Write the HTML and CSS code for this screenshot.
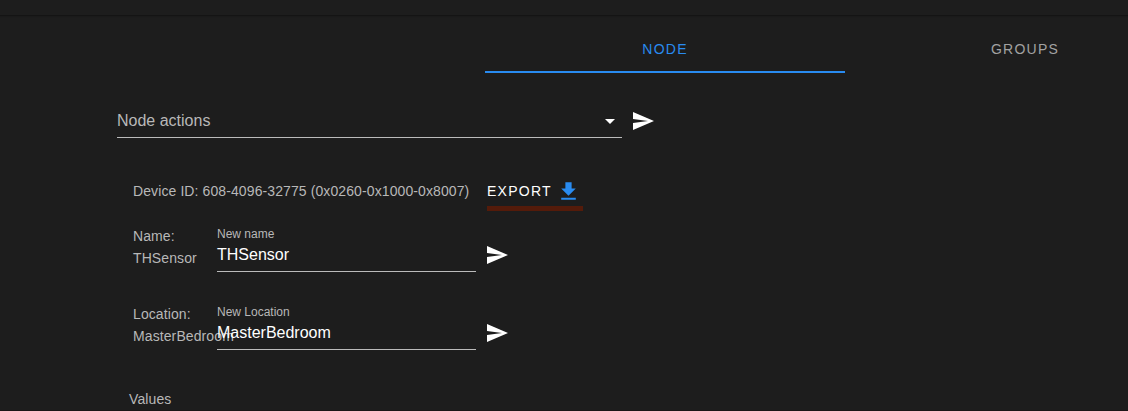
FILE: index.html
```html
<!DOCTYPE html>
<html lang="en">
<head>
<meta charset="utf-8">
<title>Node</title>
<link rel="stylesheet" href="styles.css">
</head>
<body>
<svg class="defs" width="0" height="0"><symbol id="send" viewBox="0 0 24 24"><path d="M2,21L23,12L2,3V10L17,12L2,14V21Z"/></symbol></svg>
<header class="topbar"></header>
<nav class="tabs">
  <div class="tab active"><span>NODE</span></div>
  <div class="tab"><span>GROUPS</span></div>
</nav>
<main class="content">
  <div class="actions">
    <div class="select"><span class="select-text">Node actions</span><svg class="icon" viewBox="0 0 24 24"><path d="M7,10L12,15L17,10H7Z"/></svg></div>
    <svg class="icon"><use href="#send"/></svg>
  </div>
  <div class="device">
    <span class="device-id">Device ID: 608-4096-32775 (0x0260-0x1000-0x8007)</span>
    <div class="export"><span class="export-text">EXPORT</span><svg class="icon download" viewBox="0 0 24 24"><path d="M5,20H19V18H5M19,9H15V3H9V9H5L12,16L19,9Z"/></svg></div>
  </div>
  <div class="row">
    <div class="info"><div>Name:</div><div>THSensor</div></div>
    <div class="field"><div class="label">New name</div><div class="value">THSensor</div></div>
    <svg class="icon"><use href="#send"/></svg>
  </div>
  <div class="row">
    <div class="info"><div>Location:</div><div>MasterBedroom</div></div>
    <div class="field"><div class="label">New Location</div><div class="value">MasterBedroom</div></div>
    <svg class="icon"><use href="#send"/></svg>
  </div>
  <div class="values">Values</div>
</main>
<footer class="edge"></footer>
</body>
</html>
```

FILE: styles.css
```css
* { box-sizing: border-box; }
html { overflow: hidden; }
body {
  margin: 0;
  height: 411px;
  overflow: hidden;
  display: flex;
  flex-direction: column;
  background: #1d1d1d;
  color: #b8b8b8;
  font: 14px/22px "Liberation Sans", Arial, sans-serif;
  white-space: nowrap;
}
.defs { display: none; }
.icon { width: 24px; height: 24px; flex: none; fill: #fff; }
.topbar { height: 16px; flex: none; border-bottom: 1px solid #141414; box-shadow: 0 1px 1px #1a1a1a; }
.tabs { display: flex; flex: none; height: 48px; margin: 9px 0 0 485px; overflow: hidden; }
.tab {
  display: flex;
  flex: none;
  width: 360px;
  align-items: center;
  justify-content: center;
  color: #a2a2a2;
  letter-spacing: 1.25px;
}
.active { color: #298bf0; box-shadow: inset 0 -2px #298bf0; }
.content { padding: 32px 0 0 117px; flex: 1; min-height: 0; }
.actions { display: flex; gap: 9px; height: 33px; padding-top: 4px; }
.select {
  display: flex;
  justify-content: space-between;
  width: 505px;
  height: 29px;
  border-bottom: 1px solid #bbb;
  font-size: 16px;
  line-height: 24px;
}
.device { display: flex; height: 36px; margin-top: 41px; padding-left: 16px; }
.device-id { width: 354px; line-height: 24px; letter-spacing: 0.1px; }
.export {
  display: flex;
  gap: 4px;
  width: 96px;
  height: 32px;
  border-bottom: 5px solid #541b0a;
  color: #fff;
  line-height: 24px;
  letter-spacing: 1.25px;
}
.export-text { width: 65px; }
.download { width: 25px; height: 25px; fill: #298bf0; }
.row { display: flex; height: 78px; padding: 10px 0 0 16px; }
.info { width: 84px; letter-spacing: 0.1px; }
.field {
  width: 259px;
  height: 47px;
  margin-right: 9px;
  border-bottom: 1px solid #bbb;
}
.label { height: 18px; font-size: 12px; line-height: 18px; }
.value { color: #fff; font-size: 16px; line-height: 24px; }
.row .icon { margin-top: 18px; }
.values { padding: 17px 0 0 12px; letter-spacing: 0.1px; }
.edge { height: 1px; flex: none; background: #1c1517; }
```
